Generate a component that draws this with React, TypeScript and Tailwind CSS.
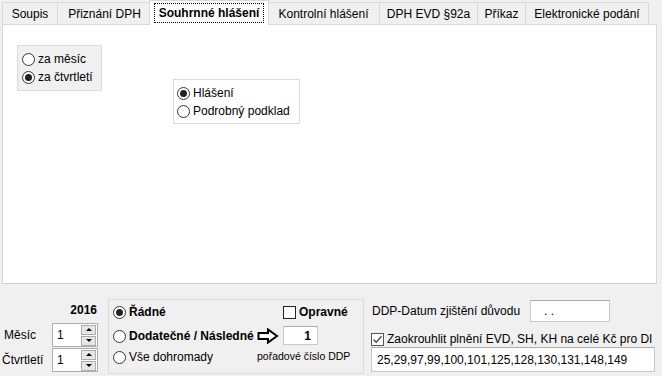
const Radio = ({ checked = false }: { checked?: boolean }) => (
  <span className="w-[13px] h-[13px] rounded-full border border-[#333333] bg-white flex items-center justify-center shrink-0">
    {checked && <span className="w-[7px] h-[7px] rounded-full bg-[#222222]" />}
  </span>
);

const Check = ({ checked = false, dark = false }: { checked?: boolean; dark?: boolean }) => (
  <span
    className={`w-[13px] h-[13px] border bg-white flex items-center justify-center shrink-0 ${
      dark ? "border-[#222222]" : "border-[#555555]"
    }`}
  >
    {checked && (
      <svg width="11" height="11" viewBox="0 0 11 11">
        <path d="M1.5 5.5 L4.2 8.2 L9.5 2.2" fill="none" stroke="#444444" strokeWidth="1.3" />
      </svg>
    )}
  </span>
);

const RadioRow = ({ label, checked, bold }: { label: string; checked?: boolean; bold?: boolean }) => (
  <div className="flex items-center gap-[3px] h-[16px]">
    <Radio checked={checked} />
    <span className={bold ? "font-bold" : ""}>{label}</span>
  </div>
);

const Spin = () => (
  <div className="w-[46px] h-[24px] border border-[#adadad] bg-white flex items-center">
    <span className="flex-1 pl-[4px]">1</span>
    <div className="flex flex-col gap-px mr-[1px]">
      <span className="w-[15px] h-[10px] bg-[#e6e6e6] border border-[#adadad] flex items-center justify-center">
        <span className="w-0 h-0 border-l-[3px] border-r-[3px] border-b-[3px] border-l-transparent border-r-transparent border-b-black" />
      </span>
      <span className="w-[15px] h-[10px] bg-[#e6e6e6] border border-[#adadad] flex items-center justify-center">
        <span className="w-0 h-0 border-l-[3px] border-r-[3px] border-t-[3px] border-l-transparent border-r-transparent border-t-black" />
      </span>
    </div>
  </div>
);

const tabs = [
  { label: "Soupis", w: "w-[55px]" },
  { label: "Přiznání DPH", w: "w-[94px]" },
  { label: "Souhrnné hlášení", w: "w-[120px]", active: true },
  { label: "Kontrolní hlášení", w: "w-[112px]" },
  { label: "DPH EVD §92a", w: "w-[98px]" },
  { label: "Příkaz", w: "w-[48px]" },
  { label: "Elektronické podání", w: "w-[124px]", last: true },
];

export default function App() {
  return (
    <div
      className="w-[662px] h-[376px] bg-[#f0f0f0] overflow-hidden text-[12px] text-black leading-none"
      style={{ fontFamily: '"Liberation Sans", Arial, sans-serif' }}
    >
      {/* tabs */}
      <div className="flex items-end h-[25px] pl-[2px]">
        {tabs.map((t) =>
          t.active ? (
            <div
              key={t.label}
              className={`${t.w} h-[25px] -mx-[2px] relative z-10 bg-white border border-b-0 border-[#d9d9d9] flex items-start justify-center pt-[2px]`}
            >
              <span className="border border-dotted border-black px-[4px] h-[20px] flex items-center font-bold">
                {t.label}
              </span>
            </div>
          ) : (
            <div
              key={t.label}
              className={`${t.w} h-[22px] mb-px bg-[#f0f0f0] border-t border-l border-[#d9d9d9] flex items-center justify-center ${
                t.last ? "border-r" : ""
              }`}
            >
              {t.label}
            </div>
          )
        )}
      </div>

      {/* panel */}
      <div className="-mt-px ml-[2px] w-[655px] h-[260px] bg-white border border-[#d9d9d9] border-b-[#d0d0d0] flex items-start">
        <div className="ml-[14px] mt-[20px] w-[85px] h-[46px] bg-[#f0f0f0] border border-[#dcdcdc] flex flex-col pl-[4px] pt-[5px] gap-[2px]">
          <RadioRow label="za měsíc" />
          <RadioRow label="za čtvrtletí" checked />
        </div>
        <div className="ml-[71px] mt-[54px] w-[127px] h-[45px] bg-white border border-[#dcdcdc] flex flex-col pl-[3px] pt-[5px] gap-[2px]">
          <RadioRow label="Hlášení" checked />
          <RadioRow label="Podrobný podklad" />
        </div>
      </div>

      {/* bottom */}
      <div className="flex items-start h-[93px]">
        <div className="w-[108px] flex flex-col">
          <div className="mt-[20px] h-[14px] text-right pr-[11px] font-bold">2016</div>
          <div className="mt-[5px] flex items-center h-[24px]">
            <span className="w-[52px] pl-[4px]">Měsíc</span>
            <Spin />
          </div>
          <div className="mt-px flex items-center h-[24px]">
            <span className="w-[52px] pl-[2px]">Čtvrtletí</span>
            <Spin />
          </div>
        </div>

        <div className="mt-[15px] w-[256px] h-[75px] border border-[#dcdcdc] flex">
          <div className="w-[148px] flex flex-col pl-[4px]">
            <div className="mt-[4px]">
              <RadioRow label="Řádné" checked bold />
            </div>
            <div className="mt-[8px]">
              <RadioRow label="Dodatečné / Následné" bold />
            </div>
            <div className="mt-[5px]">
              <RadioRow label="Vše dohromady" />
            </div>
          </div>
          <div className="flex flex-col">
            <div className="mt-[5px] pl-[26px] flex items-center gap-[3px] h-[14px]">
              <Check dark />
              <span className="font-bold">Opravné</span>
            </div>
            <div className="mt-[7px] flex items-center h-[19px]">
              <svg width="22" height="16" viewBox="0 0 22 16">
                <polygon
                  points="1.5,5 11,5 11,1.5 20,8 11,14.5 11,11 1.5,11"
                  fill="white"
                  stroke="black"
                  strokeWidth="2"
                  strokeLinejoin="miter"
                />
              </svg>
              <div className="ml-[4px] w-[35px] h-[19px] bg-white border border-[#c8c8c8] border-t-[#adadad] flex items-center justify-end pr-[6px] font-bold">
                1
              </div>
            </div>
            <div className="mt-[6px] text-[10.5px] whitespace-nowrap">pořadové číslo DDP</div>
          </div>
        </div>

        <div className="ml-[7px] w-[285px] flex flex-col">
          <div className="mt-[16px] flex items-center h-[22px]">
            <span className="w-[159px] pl-px">DDP-Datum zjištění důvodu</span>
            <div className="w-[80px] h-[22px] bg-white border border-[#c8c8c8] border-t-[#adadad] flex items-center pl-[13px]">
              . .
            </div>
          </div>
          <div className="mt-[9px] flex items-center gap-[3px] h-[16px] whitespace-nowrap overflow-hidden">
            <Check checked />
            <span>Zaokrouhlit plnění EVD, SH, KH na celé Kč pro DI</span>
          </div>
          <div className="w-[284px] h-[25px] bg-white border border-[#c8c8c8] border-t-[#adadad] flex items-center pl-[5px]">
            25,29,97,99,100,101,125,128,130,131,148,149
          </div>
        </div>
      </div>
    </div>
  );
}
